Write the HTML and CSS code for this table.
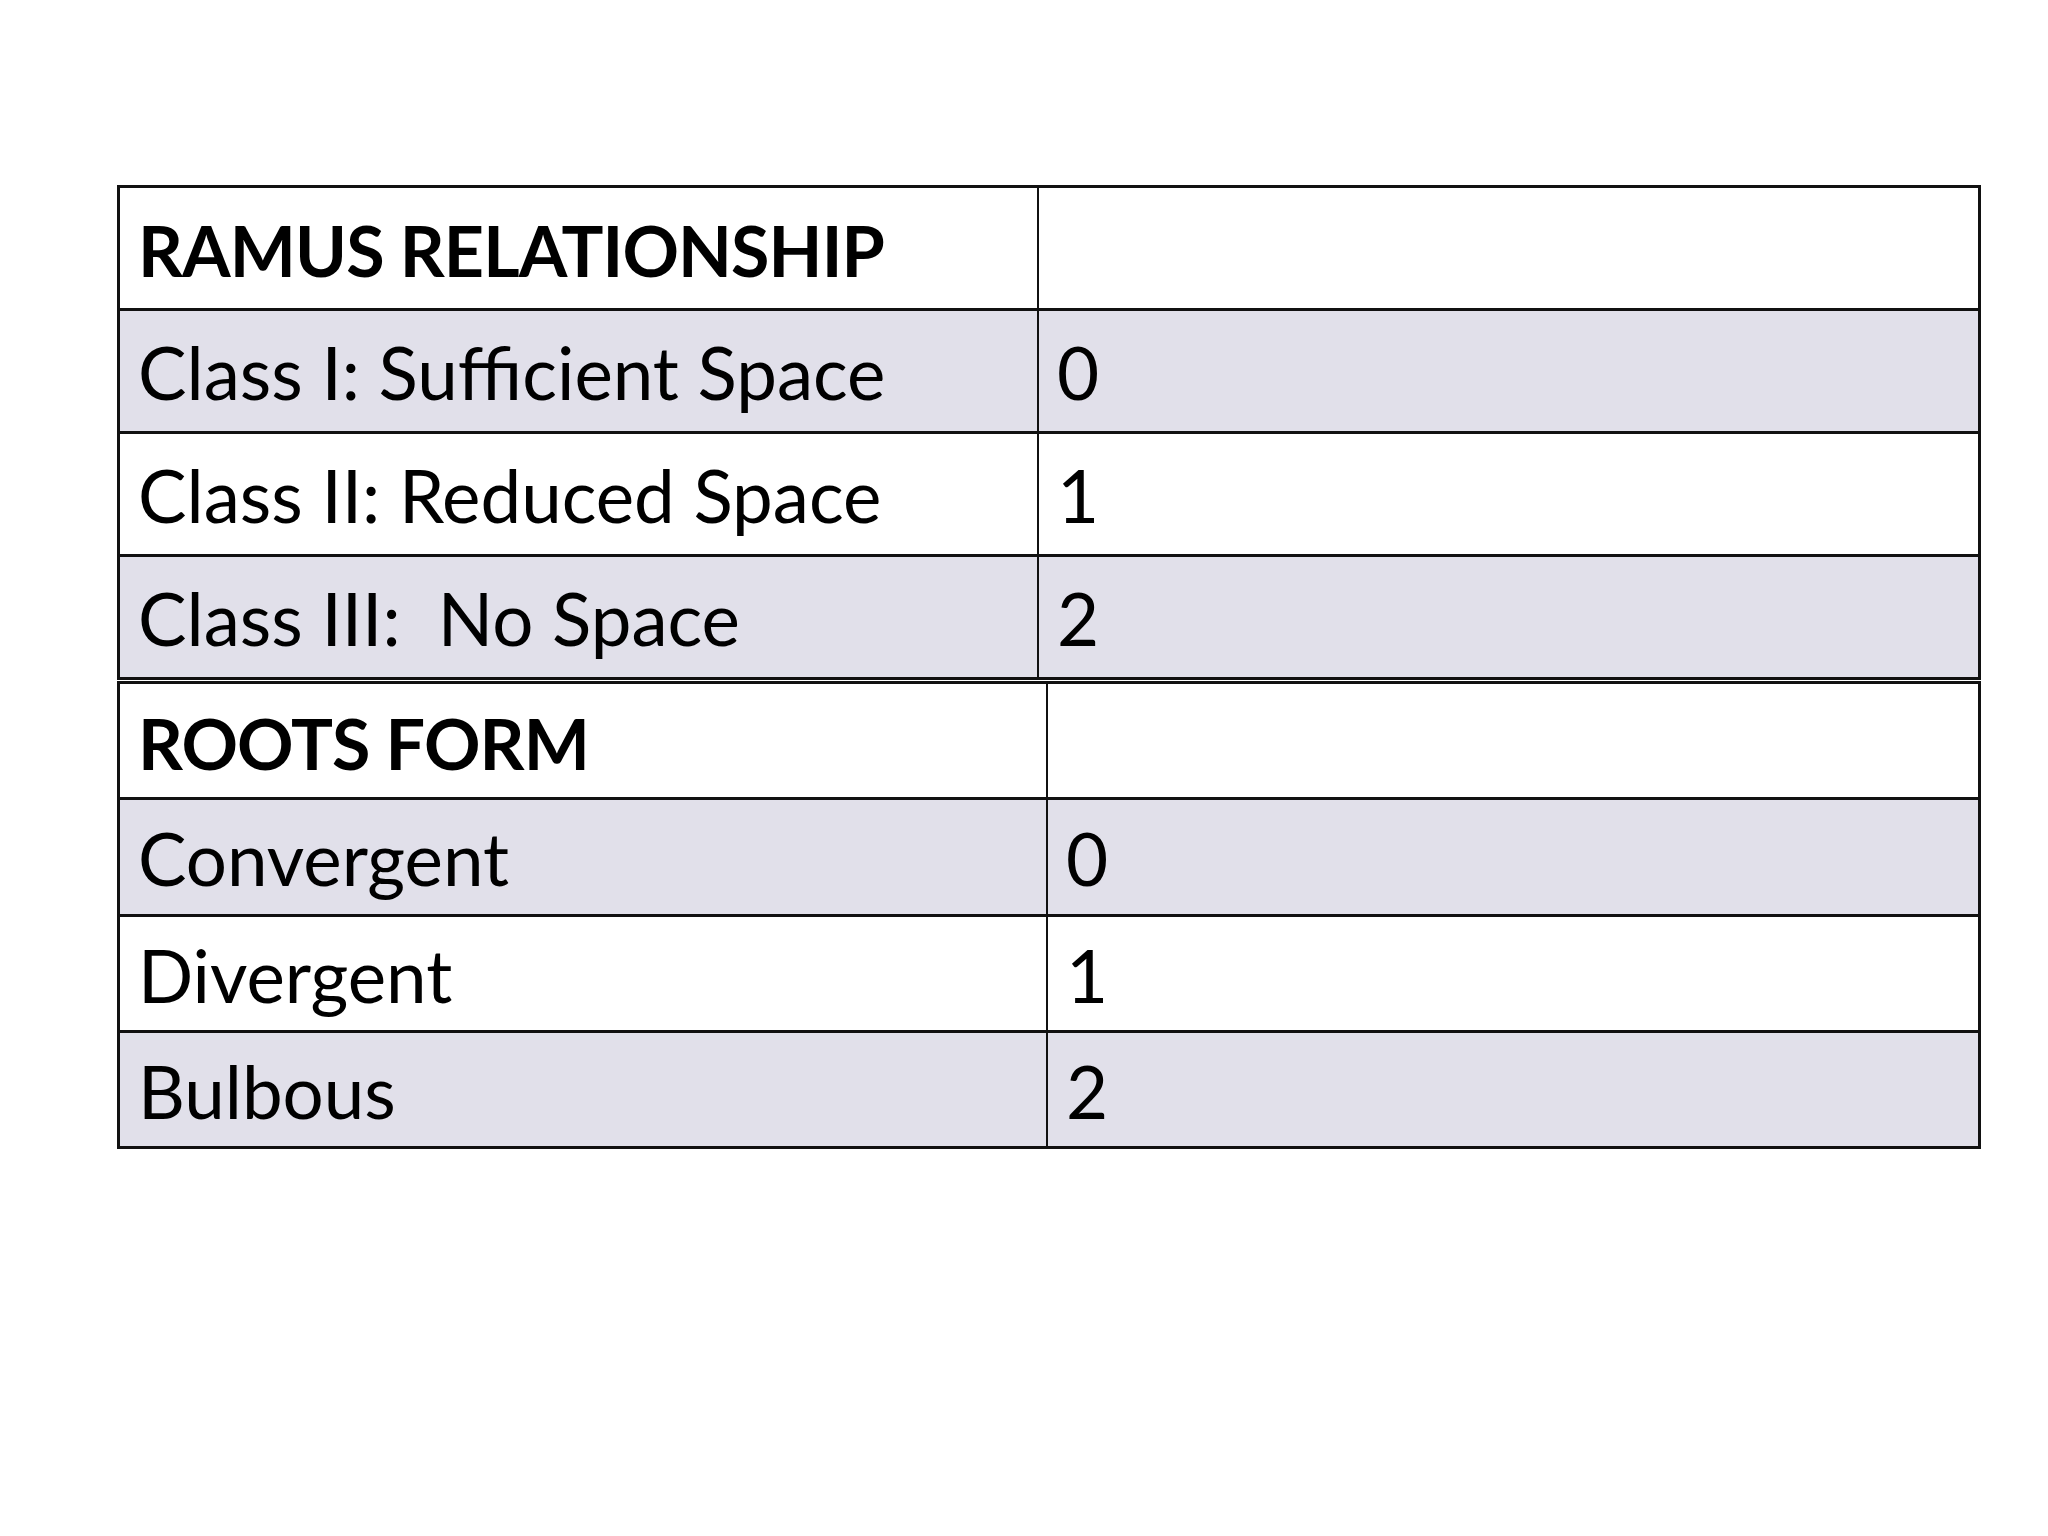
FILE: index.html
```html
<!DOCTYPE html>
<html>
<head>
<meta charset="utf-8">
<link rel="stylesheet" href="styles.css">
</head>
<body>
<main class="slide">
  <section class="grid grid-ramus">
    <div class="row head"><div class="cell label">RAMUS RELATIONSHIP</div><div class="cell value"></div></div>
    <div class="row band"><div class="cell label">Class I: Sufficient Space</div><div class="cell value">0</div></div>
    <div class="row"><div class="cell label">Class II: Reduced Space</div><div class="cell value">1</div></div>
    <div class="row band"><div class="cell label">Class III:&nbsp; No Space</div><div class="cell value">2</div></div>
  </section>
  <section class="grid grid-roots">
    <div class="row head"><div class="cell label">ROOTS FORM</div><div class="cell value"></div></div>
    <div class="row band"><div class="cell label">Convergent</div><div class="cell value">0</div></div>
    <div class="row"><div class="cell label">Divergent</div><div class="cell value">1</div></div>
    <div class="row band"><div class="cell label">Bulbous</div><div class="cell value">2</div></div>
  </section>
</main>
</body>
</html>
```
FILE: styles.css
```css
html, body {
  margin: 0;
  padding: 0;
  background: #ffffff;
}
.slide {
  width: 2048px;
  height: 1536px;
  padding: 185px 0 0 117px;
  box-sizing: border-box;
  font-family: "Lato", "Open Sans", sans-serif;
  color: #000;
}
.grid {
  width: 1864px;
  box-sizing: border-box;
  border: 3px solid #111;
}
.grid-roots {
  margin-top: 1px;
}
.row {
  display: grid;
  border-top: 3px solid #111;
  background: #fff;
}
.row:first-child { border-top: none; }
.row.band { background: #e1e0ea; }
.grid-ramus .row { grid-template-columns: 919px 1fr; height: 120px; }
.grid-roots .row { grid-template-columns: 928px 1fr; height: 113.25px; }
.cell {
  padding: 24px 0 0 18px;
  font-size: 72.7px;
  line-height: 74px;
  white-space: nowrap;
  overflow: hidden;
}
.grid-roots .cell { padding-top: 21px; }
.cell.label { border-right: 2px solid #111; }
.head .cell {
  font-weight: 700;
  font-size: 70px;
  letter-spacing: -0.9px;
  padding-top: 25px;
}
.grid-roots .head .cell { padding-top: 22px; }
```
